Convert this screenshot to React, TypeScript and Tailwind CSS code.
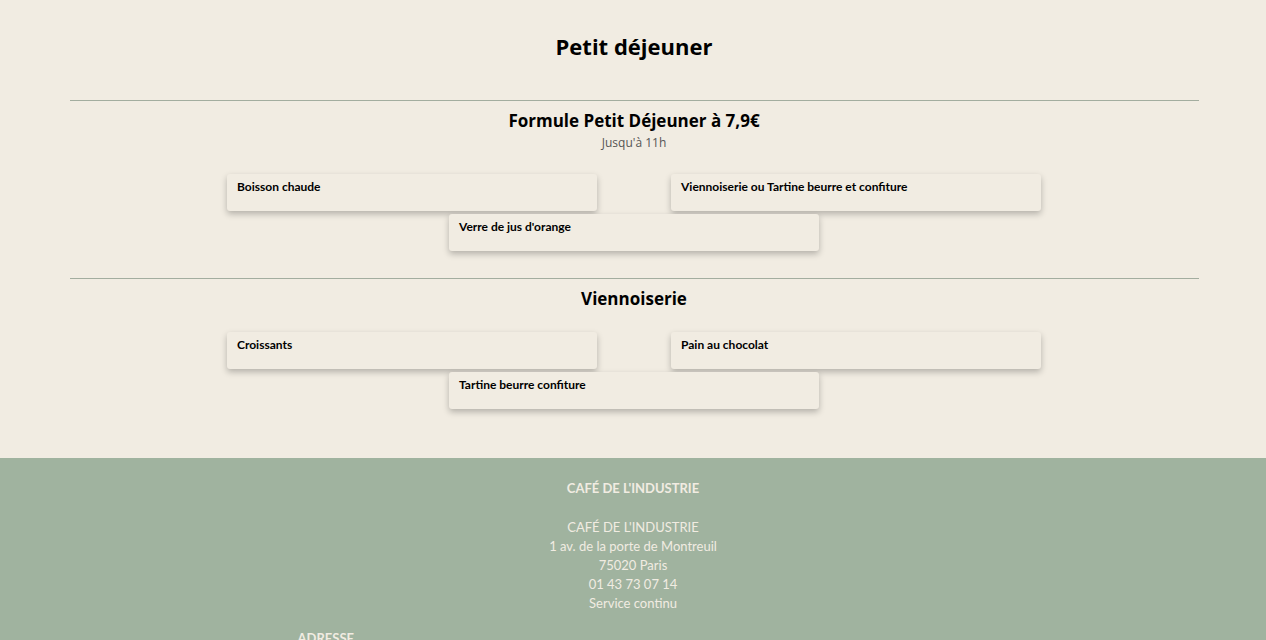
import React from 'react'

type Section = {
  title: string
  subtitle?: string
  items: string[]
}

const sections: Section[] = [
  {
    title: 'Formule Petit Déjeuner à 7,9€',
    subtitle: "Jusqu'à 11h",
    items: ['Boisson chaude', 'Viennoiserie ou Tartine beurre et confiture', "Verre de jus d'orange"],
  },
  {
    title: 'Viennoiserie',
    items: ['Croissants', 'Pain au chocolat', 'Tartine beurre confiture'],
  },
]

function MenuCard({ label }: { label: string }) {
  return (
    <div className="h-[37px] w-[370px] rounded-[3px] bg-[#f1ece2] px-[10px] pt-[4px] font-['Lato',sans-serif] text-[12px] font-bold text-black shadow-[0_3px_6px_rgba(0,0,0,0.25)]">
      {label}
    </div>
  )
}

export default function App() {
  return (
    <div className="min-h-screen bg-[#f1ece2] font-['Open_Sans',sans-serif]">
      <main className="mx-auto w-[1131px] pb-[22px] pl-[2px] pt-[30px]">
        <h1 className="text-center text-[22px] font-bold leading-[32px] text-black">Petit déjeuner</h1>
        <div className="mt-[38px]">
          {sections.map((s) => (
            <section key={s.title} className="border-t border-[#a3ad9f] pb-[27px] pt-[7px]">
              <h2 className="text-center text-[17px] font-bold leading-[26px] text-black">{s.title}</h2>
              {s.subtitle && (
                <p className="text-center text-[12px] leading-[18px] text-[#555]">{s.subtitle}</p>
              )}
              <div
                className={
                  (s.subtitle ? 'mt-[22px] ' : 'mt-[20px] ') +
                  'mx-auto flex w-[814px] flex-wrap justify-center gap-x-[74px] gap-y-[3px]'
                }
              >
                {s.items.map((it) => (
                  <MenuCard key={it} label={it} />
                ))}
              </div>
            </section>
          ))}
        </div>
      </main>
      <footer className="bg-[#a0b39f] pt-[21px] text-center font-['Lato',sans-serif] text-[13px] text-[#f1ece2]">
        <p className="font-bold leading-[18px]">CAFÉ DE L'INDUSTRIE</p>
        <div className="mt-[21px] leading-[19px]">
          <p>CAFÉ DE L'INDUSTRIE</p>
          <p>1 av. de la porte de Montreuil</p>
          <p>75020 Paris</p>
          <p>01 43 73 07 14</p>
          <p>Service continu</p>
        </div>
        <div className="mx-auto mt-[16px] w-[1131px] pb-[30px] text-left">
          <p className="ml-[230px] text-[13px] font-bold leading-[18px]">ADRESSE</p>
        </div>
      </footer>
    </div>
  )
}
